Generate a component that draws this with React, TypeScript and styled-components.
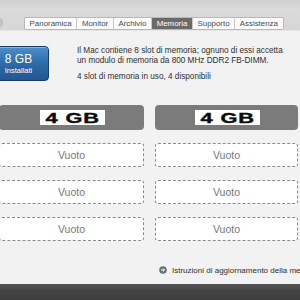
import React from 'react'
import styled, { createGlobalStyle } from 'styled-components'

const GlobalStyle = createGlobalStyle`
  html, body {
    margin: 0;
    padding: 0;
    background: #f2f2f2;
  }
  body {
    font-family: 'Liberation Sans', Arial, sans-serif;
  }
`

const Window = styled.div`
  width: 300px;
  height: 300px;
  overflow: hidden;
  display: flex;
  flex-direction: column;
  background: #f2f2f2;
`

const Toolbar = styled.div`
  height: 31px;
  flex-shrink: 0;
  display: flex;
  align-items: flex-start;
  padding-top: 17px;
  box-sizing: border-box;
  background: linear-gradient(#cfcfcf, #dadada 30%, #d6d6d6);
  border-bottom: 1px solid #e6e6e6;
`

const RoundButton = styled.div`
  width: 11px;
  height: 11px;
  margin-left: -8px;
  border-radius: 50%;
  background: #c4c4c4;
  border: 1px solid #bcbcbc;
  box-sizing: border-box;
`

const Segmented = styled.div`
  display: flex;
  margin-left: 21px;
  height: 11px;
  border: 1px solid #b8b8b8;
  border-radius: 2px;
  overflow: hidden;
  background: #fbfbfb;
`

const Tab = styled.div<{ $active?: boolean }>`
  display: flex;
  align-items: center;
  padding: 0 4.6px;
  font-size: 7.9px;
  color: ${(p) => (p.$active ? '#ffffff' : '#4a4a4a')};
  background: ${(p) => (p.$active ? '#6a6a6a' : 'transparent')};
  border-left: 1px solid #c8c8c8;
  &:first-child {
    border-left: none;
  }
`

const Content = styled.div`
  flex: 1;
  display: flex;
  flex-direction: column;
  padding-top: 15px;
`

const Summary = styled.div`
  display: flex;
  align-items: flex-start;
`

const Installed = styled.div`
  width: 62px;
  height: 35px;
  margin-left: -13px;
  flex-shrink: 0;
  box-sizing: border-box;
  border: 1px solid #1c3b60;
  border-radius: 4px;
  background: linear-gradient(#4a8fcc, #2a68a6 55%, #1f5891);
  box-shadow: inset 0 1px 0 rgba(255, 255, 255, 0.35);
  display: flex;
  flex-direction: column;
  align-items: center;
  justify-content: center;
  color: #ffffff;
  padding-left: 1px;
`

const InstalledSize = styled.div`
  font-size: 12px;
  line-height: 13px;
`

const InstalledLabel = styled.div`
  font-size: 7.5px;
  line-height: 9px;
`

const Info = styled.div`
  margin-left: 28px;
  display: flex;
  flex-direction: column;
  gap: 6px;
  font-size: 8.2px;
  line-height: 10px;
  color: #2e2e2e;
  white-space: nowrap;
`

const Slots = styled.div`
  margin-top: 23px;
  margin-left: -1px;
  display: grid;
  grid-template-columns: 145px 143px;
  column-gap: 11px;
  row-gap: 13px;
`

const FilledSlot = styled.div`
  height: 25px;
  border-radius: 4px;
  background: #7b7b7b;
  display: flex;
  align-items: center;
  justify-content: center;
`

const SizeLabel = styled.div`
  background: #ffffff;
  width: 65px;
  height: 15px;
  margin-left: 2px;
  display: flex;
  align-items: center;
  justify-content: center;
`

const SizeText = styled.span`
  display: inline-block;
  font-family: 'Liberation Sans', Arial, sans-serif;
  font-weight: 700;
  font-size: 15px;
  line-height: 15px;
  letter-spacing: 0.6px;
  color: #0c0c0c;
  transform: scaleX(1.45);
  -webkit-text-stroke: 0.4px #0c0c0c;
`

const EmptySlot = styled.div`
  height: 24px;
  box-sizing: border-box;
  border: 1px dashed #8a8a8a;
  border-radius: 3px;
  background: #ffffff;
  display: flex;
  align-items: center;
  justify-content: center;
  font-size: 10.5px;
  color: #777777;
`

const Footer = styled.div`
  margin-top: auto;
  height: 28px;
  display: flex;
  align-items: center;
  padding-left: 159px;
  gap: 5px;
  font-size: 8px;
  color: #2e2e2e;
  white-space: nowrap;
`

const BottomBar = styled.div`
  height: 16px;
  flex-shrink: 0;
  background: linear-gradient(#555555, #444444 40%, #3e3e3e);
`

const ArrowIcon = () => (
  <svg width="8" height="8" viewBox="0 0 8 8" style={{ flexShrink: 0 }}>
    <circle cx="4" cy="4" r="3.8" fill="#6e6e6e" />
    <path d="M2 4h3.4M3.9 2.4L5.5 4 3.9 5.6" stroke="#fff" strokeWidth="1" fill="none" />
  </svg>
)

const tabs = ['Panoramica', 'Monitor', 'Archivio', 'Memoria', 'Supporto', 'Assistenza']

const slots: (string | null)[] = ['4 GB', '4 GB', null, null, null, null, null, null]

const App: React.FC = () => {
  return (
    <>
      <GlobalStyle />
      <Window>
        <Toolbar>
          <RoundButton />
          <Segmented>
            {tabs.map((t) => (
              <Tab key={t} $active={t === 'Memoria'}>
                {t}
              </Tab>
            ))}
          </Segmented>
        </Toolbar>
        <Content>
          <Summary>
            <Installed>
              <InstalledSize>8 GB</InstalledSize>
              <InstalledLabel>Installati</InstalledLabel>
            </Installed>
            <Info>
              <div>
                Il Mac contiene 8 slot di memoria; ognuno di essi accetta
                <br />
                un modulo di memoria da 800 MHz DDR2 FB-DIMM.
              </div>
              <div>4 slot di memoria in uso, 4 disponibili</div>
            </Info>
          </Summary>
          <Slots>
            {slots.map((s, i) =>
              s ? (
                <FilledSlot key={i}>
                  <SizeLabel>
                    <SizeText>{s}</SizeText>
                  </SizeLabel>
                </FilledSlot>
              ) : (
                <EmptySlot key={i}>Vuoto</EmptySlot>
              )
            )}
          </Slots>
          <Footer>
            <ArrowIcon />
            <span>Istruzioni di aggiornamento della memoria</span>
          </Footer>
        </Content>
        <BottomBar />
      </Window>
    </>
  )
}

export default App
